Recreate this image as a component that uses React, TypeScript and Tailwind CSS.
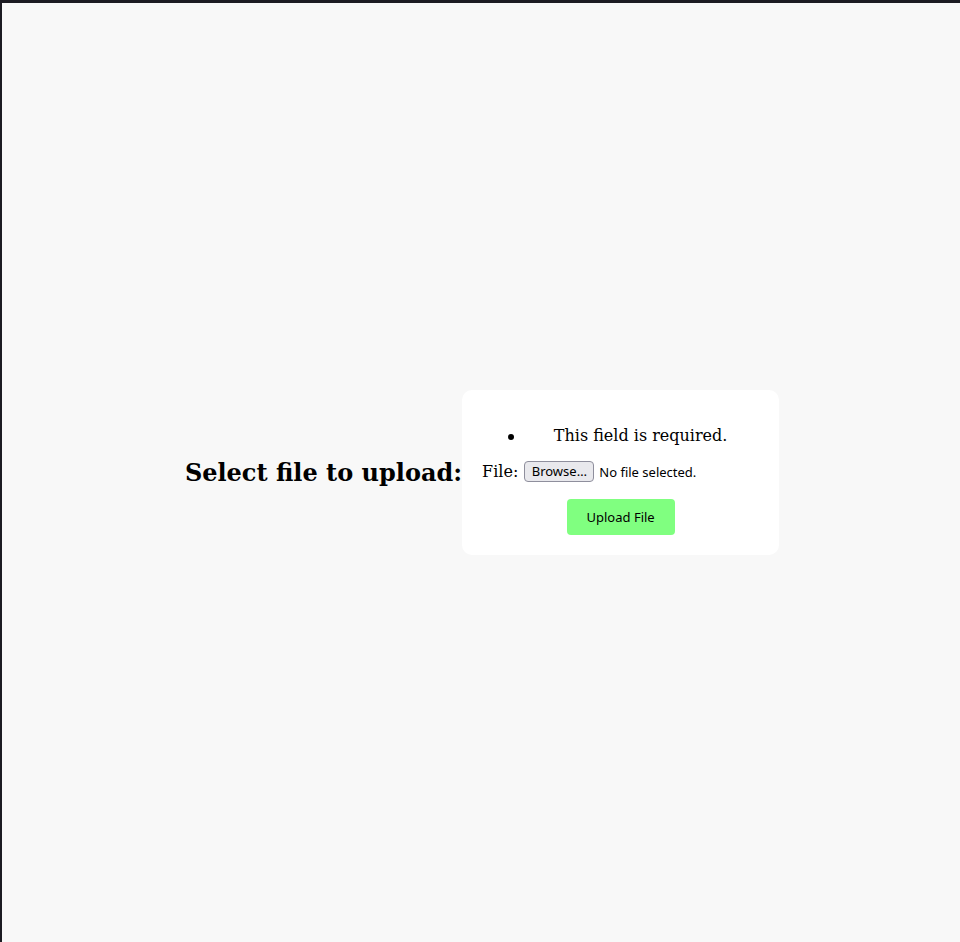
import React from "react";

export default function App() {
  return (
    <div className="h-[942px] w-full box-border border-t-[3px] border-l-2 border-[#1c1b22] bg-[#f8f8f8] flex items-center justify-center pl-[2px]">
      <h2 className="m-0 text-[24px] leading-[30px] font-bold text-black [font-family:'DejaVu_Serif',serif]">
        Select file to upload:
      </h2>
      <div className="w-[317px] bg-white rounded-[10px] p-5 box-border flex flex-col">
        <ul className="m-0 p-0 pt-[14px] pl-[40px] list-none">
          <li className="relative h-6 leading-6 text-center text-[16px] text-black [font-family:'DejaVu_Serif',serif]">
            <span className="absolute left-[-14px] top-[10px] w-[6px] h-[6px] rounded-full bg-black" />
            This field is required.
          </li>
        </ul>
        <div className="mt-[11px] h-6 flex items-center">
          <span className="pt-px text-[16px] text-black [font-family:'DejaVu_Serif',serif]">File:</span>
          <span className="ml-[6px] h-[21px] w-[70px] box-border border border-[#8f8f9d] bg-[#e9e9ed] rounded-[4px] flex items-center justify-center pt-[2px] text-[13px] text-black [font-family:'Noto_Sans',sans-serif]">
            Browse…
          </span>
          <span className="ml-[5px] pt-[3px] text-[13px] text-black [font-family:'Noto_Sans',sans-serif]">
            No file selected.
          </span>
        </div>
        <div className="mt-4 flex justify-center">
          <button className="h-9 w-[108px] pt-[2px] bg-[#80ff80] rounded-[4px] text-[13px] text-black [font-family:'Noto_Sans',sans-serif]">
            Upload File
          </button>
        </div>
      </div>
    </div>
  );
}
